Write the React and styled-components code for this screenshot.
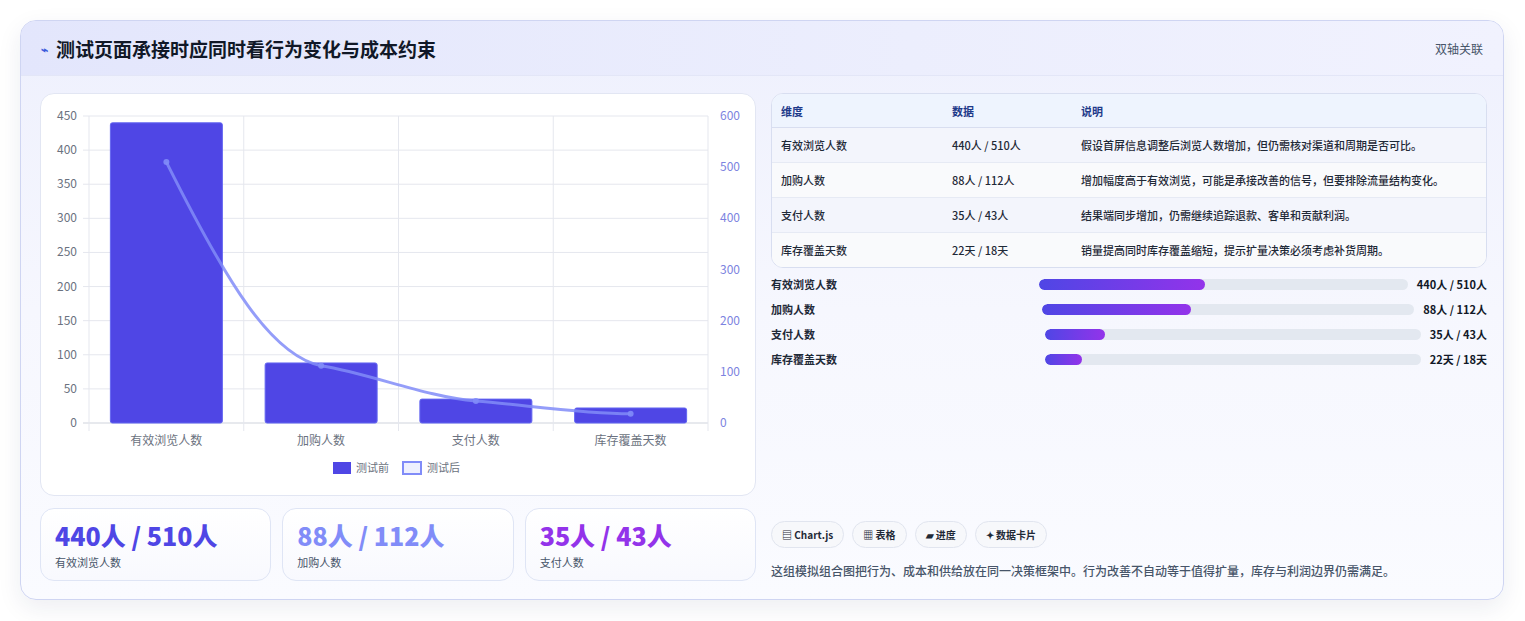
import React from "react";
import styled, { createGlobalStyle } from "styled-components";

const Global = createGlobalStyle`
  body { margin: 0; background: #fff; font-family: "Noto Sans CJK SC", "Noto Sans", sans-serif; }
`;
const Page = styled.div`padding: 20px 21px 21px 20px;`;
const Card = styled.div`
  border: 1px solid #cfd5f2; border-radius: 16px; overflow: hidden;
  background: linear-gradient(180deg, #eef0fd 0%, #f6f7fe 50%, #fafbff 100%);
  box-shadow: 0 8px 24px rgba(30,40,90,0.08);
`;
const Header = styled.div`
  height: 54px; display: flex; align-items: center; justify-content: space-between;
  padding: 0 20px; background: linear-gradient(90deg, #e3e6fc, #eceefd 60%, #f1f2fe);
  border-bottom: 1px solid #e3e6f7;
`;
const Title = styled.h1`margin: 0; font-size: 19px; font-weight: 700; color: #111827; display: flex; align-items: center; gap: 8px;`;
const Tag = styled.span`font-size: 12px; color: #475569;`;
const Body = styled.div`display: grid; grid-template-columns: 716px 716px; gap: 15px; padding: 17px 18px 18px 19px;`;
const Col = styled.div`display: flex; flex-direction: column; gap: 12px;`;
const ChartBox = styled.div`height: 403px; background: #fff; border: 1px solid #e2e6f3; border-radius: 14px; box-sizing: border-box;`;
const Stats = styled.div`display: grid; grid-template-columns: repeat(3, 1fr); gap: 11px;`;
const Stat = styled.div`
  height: 73px; box-sizing: border-box; border: 1px solid #dfe5f5; border-radius: 14px;
  background: linear-gradient(180deg, #fff, #f8f9fe); padding: 10px 14px;
`;
const StatVal = styled.div`font-size: 25px; font-weight: 800; color: ${p => p.c}; line-height: 32px;`;
const StatLbl = styled.div`font-size: 11px; color: #475569; margin-top: 3px;`;
const Table = styled.table`
  width: 100%; border-collapse: separate; border-spacing: 0; border: 1px solid #d8def0; border-radius: 12px;
  overflow: hidden; font-size: 11px; background: #fff;
  th { text-align: left; color: #1e3a8a; font-weight: 700; height: 33px; background: #eef4fe; border-bottom: 1px solid #d8def0; padding: 0 9px; }
  td { height: 34px; padding: 0 9px; color: #1f2937; font-weight: 500; border-bottom: 1px solid #e6eaf4; }
  tr:last-child td { border-bottom: none; }
  tbody tr:nth-child(odd) td { background: #f3f5fc; }
  tbody tr:nth-child(even) td { background: #f9fafc; }
`;
const Bars = styled.div`display: flex; flex-direction: column; gap: 7px; margin-top: 7px;`;
const BarRow = styled.div`display: flex; align-items: center; gap: 9px; height: 18px; font-size: 11px; font-weight: 600; color: #1f2937;`;
const BarLbl = styled.div`flex: 1 1 0;`;
const Track = styled.div`flex: 1.42 1 0; height: 11px; border-radius: 6px; background: #e3e8f0; overflow: hidden;`;
const Fill = styled.div`height: 100%; border-radius: 6px; background: linear-gradient(90deg, #4f46e5, #9333ea);`;
const BarVal = styled.div`font-weight: 700; color: #111827;`;
const Spacer = styled.div`flex: 1;`;
const Chips = styled.div`display: flex; gap: 8px;`;
const Chip = styled.span`
  height: 27px; padding: 0 10px; border: 1px solid #e1e5ef; border-radius: 14px; background: #f7f8fb;
  display: inline-flex; align-items: center; font-size: 10px; font-weight: 700; color: #1f2937; box-sizing: border-box;
`;
const Note = styled.p`margin: 0 0 2px; font-size: 12px; color: #475569; font-weight: 500;`;

const rows = [
  ["有效浏览人数", "440人 / 510人", "假设首屏信息调整后浏览人数增加，但仍需核对渠道和周期是否可比。", 45],
  ["加购人数", "88人 / 112人", "增加幅度高于有效浏览，可能是承接改善的信号，但要排除流量结构变化。", 40],
  ["支付人数", "35人 / 43人", "结果端同步增加，仍需继续追踪退款、客单和贡献利润。", 16],
  ["库存覆盖天数", "22天 / 18天", "销量提高同时库存覆盖缩短，提示扩量决策必须考虑补货周期。", 10],
];

function Chart() {
  const x0 = 48, x1 = 667, y0 = 22, y1 = 329;
  const ly = v => y1 - (v / 450) * (y1 - y0);
  const ry = v => y1 - (v / 600) * (y1 - y0);
  const cw = (x1 - x0) / 4;
  const cx = i => x0 + cw * i + cw / 2;
  const before = [440, 88, 35, 22], after = [510, 112, 43, 18];
  const pts = after.map((v, i) => [cx(i), ry(v)]);
  const d = `M${pts[0][0]},${pts[0][1]} C${pts[0][0] + 60},${pts[0][1] + 120} ${pts[1][0] - 50},${pts[1][1] - 10} ${pts[1][0]},${pts[1][1]} C${pts[1][0] + 50},${pts[1][1] + 8} ${pts[2][0] - 50},${pts[2][1] - 4} ${pts[2][0]},${pts[2][1]} C${pts[2][0] + 50},${pts[2][1] + 4} ${pts[3][0] - 50},${pts[3][1]} ${pts[3][0]},${pts[3][1]}`;
  return (
    <svg width="714" height="401" style={{ display: "block" }} fontFamily="'Noto Sans CJK SC', sans-serif">
      {[0, 50, 100, 150, 200, 250, 300, 350, 400, 450].map(v => (
        <g key={v}>
          <line x1={x0 - 6} x2={x1} y1={ly(v)} y2={ly(v)} stroke={v === 0 ? "#cfd3dc" : "#e5e7ee"} />
          <text x={x0 - 12} y={ly(v) + 4} fontSize="12" fill="#6b7280" textAnchor="end">{v}</text>
        </g>
      ))}
      {[0, 100, 200, 300, 400, 500, 600].map(v => (
        <text key={v} x={x1 + 12} y={ry(v) + 4} fontSize="12" fill="#7c83e0">{v}</text>
      ))}
      {[0, 1, 2, 3, 4].map(i => (
        <line key={i} x1={x0 + cw * i} x2={x0 + cw * i} y1={y0} y2={y1 + 8} stroke="#e5e7ee" />
      ))}
      {before.map((v, i) => (
        <rect key={i} x={cx(i) - 56} y={ly(v)} width="112" height={y1 - ly(v)} rx="2" fill="#4f46e5" stroke="#6366f1" />
      ))}
      <path d={d} fill="none" stroke="rgba(129,140,248,0.85)" strokeWidth="3" />
      {pts.map(([x, y], i) => <circle key={i} cx={x} cy={y} r="3" fill="rgba(129,140,248,0.9)" />)}
      {["有效浏览人数", "加购人数", "支付人数", "库存覆盖天数"].map((t, i) => (
        <text key={t} x={cx(i)} y={351} fontSize="12" fill="#6b7280" textAnchor="middle">{t}</text>
      ))}
      <rect x="292" y="368" width="18" height="12" fill="#4f46e5" />
      <text x="315" y="378" fontSize="11" fill="#6b7280">测试前</text>
      <rect x="362" y="368" width="18" height="12" fill="#eef0fe" stroke="#818cf8" strokeWidth="2" />
      <text x="386" y="378" fontSize="11" fill="#6b7280">测试后</text>
    </svg>
  );
}

export default function App() {
  return (
    <Page>
      <Global />
      <Card>
        <Header>
          <Title><span style={{ color: "#3b5bdb", fontSize: 12 }}>⌁</span>测试页面承接时应同时看行为变化与成本约束</Title>
          <Tag>双轴关联</Tag>
        </Header>
        <Body>
          <Col>
            <ChartBox><Chart /></ChartBox>
            <Stats>
              <Stat><StatVal c="#4f46e5">440人 / 510人</StatVal><StatLbl>有效浏览人数</StatLbl></Stat>
              <Stat><StatVal c="#818cf8">88人 / 112人</StatVal><StatLbl>加购人数</StatLbl></Stat>
              <Stat><StatVal c="#9333ea">35人 / 43人</StatVal><StatLbl>支付人数</StatLbl></Stat>
            </Stats>
          </Col>
          <Col style={{ gap: 0 }}>
            <Table>
              <thead><tr><th style={{ width: 153 }}>维度</th><th style={{ width: 111 }}>数据</th><th>说明</th></tr></thead>
              <tbody>{rows.map(r => <tr key={r[0]}><td>{r[0]}</td><td>{r[1]}</td><td>{r[2]}</td></tr>)}</tbody>
            </Table>
            <Bars>
              {rows.map(r => (
                <BarRow key={r[0]}>
                  <BarLbl>{r[0]}</BarLbl>
                  <Track><Fill style={{ width: r[3] + "%" }} /></Track>
                  <BarVal>{r[1]}</BarVal>
                </BarRow>
              ))}
            </Bars>
            <Spacer />
            <Chips>
              <Chip>▤ Chart.js</Chip><Chip>▦ 表格</Chip><Chip>▰ 进度</Chip><Chip>✦ 数据卡片</Chip>
            </Chips>
            <Note style={{ marginTop: 14 }}>这组模拟组合图把行为、成本和供给放在同一决策框架中。行为改善不自动等于值得扩量，库存与利润边界仍需满足。</Note>
          </Col>
        </Body>
      </Card>
    </Page>
  );
}
